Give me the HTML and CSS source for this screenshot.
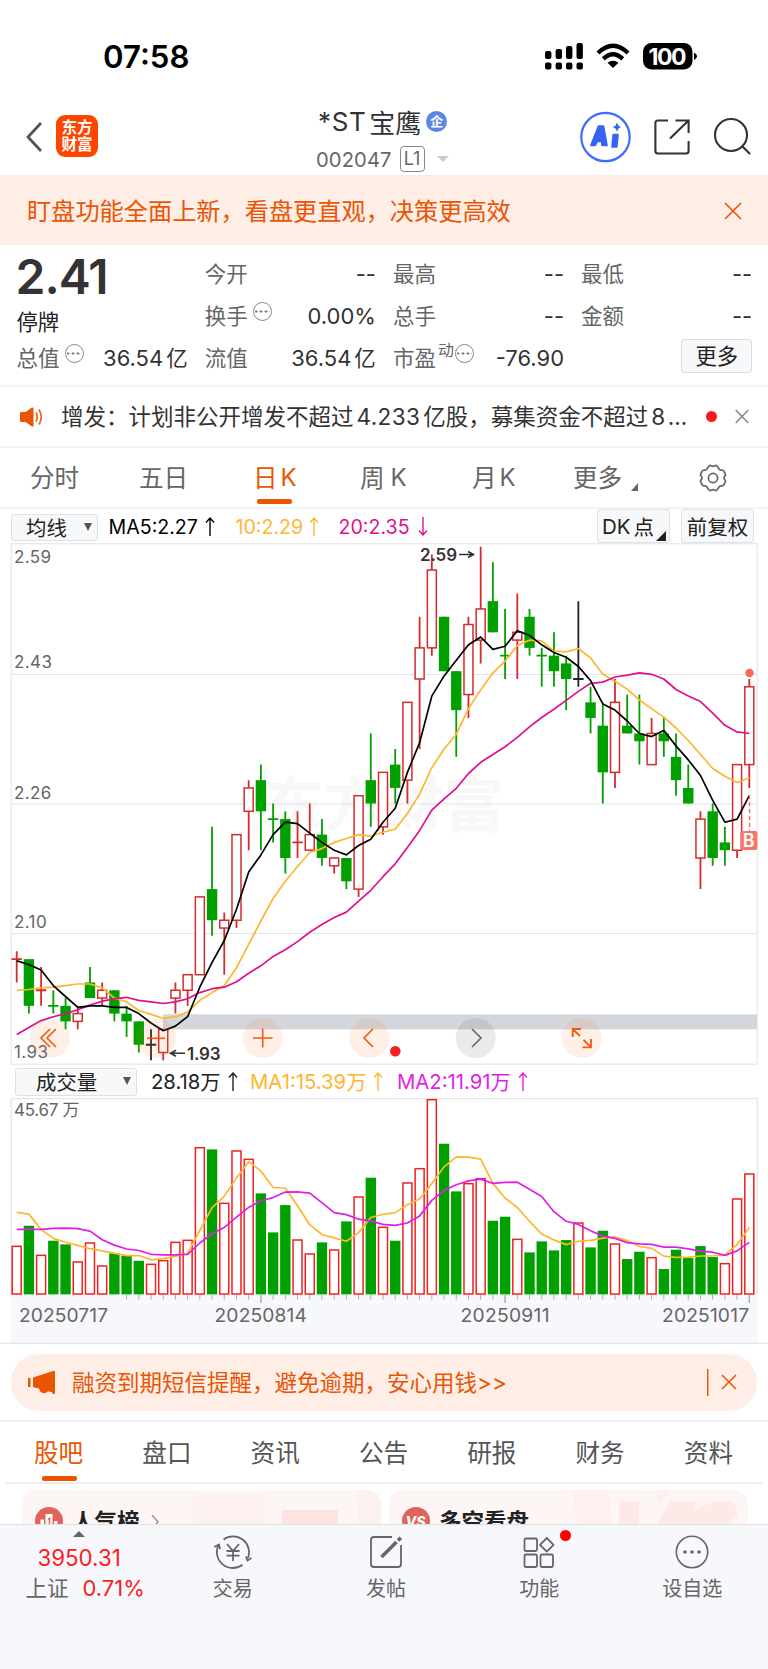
FILE: index.html
```html
<!DOCTYPE html>
<html lang="zh-CN">
<head>
<meta charset="utf-8">
<title>*ST宝鹰 002047</title>
<link rel="stylesheet" href="styles.css">
</head>
<body>
<div class="status">
  <span class="time">07:58</span>
  <svg class="status-icons" width="153" height="28" viewBox="544 42 153 28">
    <g fill="#000">
      <rect x="545" y="51" width="6.4" height="8" rx="2"/><rect x="555.6" y="49" width="6.4" height="10" rx="2"/><rect x="566" y="46" width="6.4" height="13" rx="2"/><rect x="576.5" y="43" width="6.4" height="16" rx="2"/>
      <rect x="545" y="62.6" width="6.4" height="6.8" rx="2"/><rect x="555.6" y="62.6" width="6.4" height="6.8" rx="2"/><rect x="566" y="62.6" width="6.4" height="6.8" rx="2"/><rect x="576.5" y="62.6" width="6.4" height="6.8" rx="2"/>
      <path d="M613 68 L607.5 62.8 Q613 58.8 618.5 62.8 Z"/>
      <rect x="643" y="43" width="49.5" height="26.6" rx="8.5"/>
      <path d="M694 52.5 Q697 54 697 56.3 T694 60.2Z"/>
    </g>
    <g fill="none" stroke="#000" stroke-width="4.4"><path d="M598 53 Q613 38.5 628 53"/><path d="M603.3 58.8 Q613 49.6 622.7 58.8"/></g>
    <text x="667.5" y="64.6" class="battery" text-anchor="middle" textLength="38">100</text>
  </svg>
</div>

<header class="header">
  <svg class="back" width="18" height="32" viewBox="0 0 18 32"><path d="M16 2 L3 16 L16 30" fill="none" stroke="#555" stroke-width="2.8"/></svg>
  <div class="logo"><span>东方</span><span>财富</span></div>
  <div class="title">
    <div class="name">*ST<span class="cn">宝鹰</span><span class="badge">企</span></div>
    <div class="code">002047<span class="l1">L1</span><svg width="12" height="6" viewBox="0 0 12 6"><path d="M0 0H12L6 6Z" fill="#ccc"/></svg></div>
  </div>
  <svg class="tools" width="172" height="52" viewBox="580 111 172 52">
    <circle cx="605.5" cy="137" r="24.2" fill="none" stroke="#3b6dff" stroke-width="2.2"/>
    <g fill="#3763f5" stroke="#3763f5" stroke-width="1.6" stroke-linejoin="round">
      <path fill-rule="evenodd" d="M598.5 126H603.5L607 145.5H602L601.4 141.5H597.3L595.3 145.5H590.8Z M598.6 137.6H600.8L600.4 132Z"/>
      <path d="M613.2 134.5H618L616.8 147H612Z"/>
      <path stroke="none" d="M617 122.6 L618.5 125.7 L621 127 L618.5 128.5 L617 131.4 L615.5 128.5 L612.8 127 L615.5 125.7Z"/>
    </g>
    <g fill="none" stroke="#333" stroke-width="2.1">
      <path d="M668 120.5H658Q655.4 120.5 655.4 123V151Q655.4 153.5 658 153.5H686Q688.6 153.5 688.6 151V141"/>
      <path d="M675.5 120.5H688.6V133M688 121L670 138.5"/>
      <circle cx="731" cy="135" r="16"/><path d="M742.5 146.5L750 154"/>
    </g>
  </svg>
</header>

<div class="banner"><span>盯盘功能全面上新，看盘更直观，决策更高效</span>
  <svg width="18" height="18" viewBox="0 0 18 18"><path d="M1 1L17 17M17 1L1 17" stroke="#ea5504" stroke-width="1.6"/></svg></div>

<section class="quote">
  <div class="last"><div class="price">2.41</div><div class="halt">停牌</div></div>
  <div class="cell"><span>今开</span><b>--</b></div>
  <div class="cell"><span>最高</span><b>--</b></div>
  <div class="cell"><span>最低</span><b>--</b></div>
  <div class="cell"><span>换手<i class="info"></i></span><b>0.00%</b></div>
  <div class="cell"><span>总手</span><b>--</b></div>
  <div class="cell"><span>金额</span><b>--</b></div>
  <div class="cell"><span>总值<i class="info"></i></span><b>36.54<em>亿</em></b></div>
  <div class="cell"><span>流值</span><b>36.54<em>亿</em></b></div>
  <div class="cell"><span>市盈<sup>动</sup><i class="info tight"></i></span><b>-76.90</b></div>
  <div class="cell right"><button class="more">更多</button></div>
</section>

<div class="news">
  <svg width="23" height="20" viewBox="0 0 23 20"><path d="M0 6.5Q0 5 1.5 5H5.5L12 .5Q13.5 0 13.5 1.5V18.5Q13.5 20 12 19.5L5.5 15H1.5Q0 15 0 13.500Z" fill="#ea5504"/><path d="M16 5.500Q18.500 10 16 14.500M19 2.500Q23.500 10 19 17.500" fill="none" stroke="#f26a24" stroke-width="1.8"/></svg>
  <span class="news-text">增发：计划非公开增发不超过<i>4.233</i>亿股，募集资金不超过<i>8</i><i class="more-dots">…</i></span>
  <span class="dot"></span>
  <svg width="14" height="15" viewBox="0 0 14 15"><path d="M.7 1L13.300 14M13.300 1L.7 14" stroke="#888" stroke-width="1.500"/></svg>
</div>

<nav class="periods">
  <span>分时</span><span>五日</span><span class="on">日<i>K</i></span><span>周<i class="wide">K</i></span><span>月<i>K</i></span>
  <span>更多<svg class="corner" width="7" height="8" viewBox="0 0 7 8"><path d="M7 0V8H0Z" fill="#666"/></svg></span>
  <span><svg class="gear" width="28" height="28" viewBox="0 0 28 28" fill="none" stroke="#666" stroke-width="1.7" stroke-linejoin="round"><path d="M9.800 2.200Q10.800 1 12.200 1.800Q14 3 15.800 1.800Q17.200 1 18.200 2.200L20.300 5.300Q21 6.200 22.500 6.200Q24.800 6.200 25.200 7.600L26.300 10.200Q26.800 11.300 25.700 12.300Q24.300 14 25.700 15.700Q26.800 16.700 26.300 17.800L25.200 20.400Q24.800 21.800 22.500 21.800Q21 21.800 20.300 22.700L18.200 25.800Q17.200 27 15.800 26.200Q14 25 12.200 26.200Q10.800 27 9.800 25.800L7.700 22.700Q7 21.800 5.500 21.800Q3.200 21.800 2.800 20.400L1.700 17.800Q1.200 16.700 2.300 15.700Q3.700 14 2.300 12.300Q1.200 11.300 1.700 10.200L2.800 7.600Q3.200 6.200 5.500 6.200Q7 6.200 7.700 5.300Z"/><circle cx="14" cy="14" r="4.600"/></svg></span>
</nav>

<div class="ma-row">
  <button class="pick ma-pick">均线<svg width="8" height="8" viewBox="0 0 8 8"><path d="M0 0H8L4 8Z" fill="#555"/></svg></button>
  <span class="ma c5">MA5:2.27<svg class="arrow" width="10" height="19" viewBox="0 0 10 19"><path d="M5 19V1M1 5.500L5 1L9 5.500"/></svg></span>
  <span class="ma c10">10:2.29<svg class="arrow" width="10" height="19" viewBox="0 0 10 19"><path d="M5 19V1M1 5.500L5 1L9 5.500"/></svg></span>
  <span class="ma c20">20:2.35<svg class="arrow" width="10" height="19" viewBox="0 0 10 19"><path d="M5 0V18M1 13.500L5 18L9 13.500"/></svg></span>
  <button class="pick dk">DK<em>点</em><svg width="10" height="10" viewBox="0 0 10 10"><path d="M10 0V10H0Z" fill="#222"/></svg></button>
  <button class="pick fq">前复权</button>
</div>

<svg id="price" class="chart" width="768" height="523" viewBox="0 543 768 523"></svg>

<div class="vol-row">
  <button class="pick vol-pick">成交量<svg width="8" height="8" viewBox="0 0 8 8"><path d="M0 0H8L4 8Z" fill="#555"/></svg></button>
  <span class="ma v0">28.18<em>万</em><svg class="arrow" width="10" height="19" viewBox="0 0 10 19"><path d="M5 19V1M1 5.500L5 1L9 5.500"/></svg></span>
  <span class="ma v1">MA1:15.39<em>万</em><svg class="arrow" width="10" height="19" viewBox="0 0 10 19"><path d="M5 19V1M1 5.500L5 1L9 5.500"/></svg></span>
  <span class="ma v2">MA2:11.91<em>万</em><svg class="arrow" width="10" height="19" viewBox="0 0 10 19"><path d="M5 19V1M1 5.500L5 1L9 5.500"/></svg></span>
</div>

<svg id="volume" class="chart" width="768" height="246" viewBox="0 1098 768 246"></svg>

<div class="promo-wrap"><div class="promo">
  <svg width="27" height="23" viewBox="0 0 27 23"><path d="M0 7H2.500V16H0ZM5 6.500L25 0H27V23H24.500V21.500L20 20.300Q17 23.500 13.500 21.500Q11.500 20.500 11.300 17.700L5 16Z" fill="#ea5504"/></svg>
  <span>融资到期短信提醒，避免逾期，安心用钱&gt;&gt;</span>
  <svg class="promo-x" width="30" height="27" viewBox="0 0 30 27"><path d="M.7 0V27M15 6L29 20M29 6L15 20" stroke="#ea5504" stroke-width="1.500" fill="none"/></svg>
</div></div>

<nav class="sections"><span class="on">股吧</span><span>盘口</span><span>资讯</span><span>公告</span><span>研报</span><span>财务</span><span>资料</span></nav>

<div class="cards">
  <div class="card">
    <svg class="art" width="200" height="60" viewBox="0 0 200 60"><path d="M12 3H84V60H12ZM175 0H196L200 14V60H180Z" fill="#fdf1ef"/><rect x="101" y="20" width="56" height="40" fill="#fde3e1"/></svg>
    <svg class="ico" width="28" height="28" viewBox="0 0 28 28"><circle cx="14" cy="14" r="14" fill="#e0645c"/><path d="M5.500 12.500H9V28H5.500ZM10.500 7H17.500V28H10.500ZM19 14H22.500V28H19Z" fill="#fff"/><path d="M12.800 12.500L14.500 11.200V20" stroke="#e0645c" stroke-width="1.500" fill="none"/></svg>
    <span>人气榜</span>
    <svg class="chev" width="8" height="16" viewBox="0 0 8 16"><path d="M1 1L7 8L1 15" fill="none" stroke="#999" stroke-width="1.500"/></svg>
  </div>
  <div class="card">
    <svg class="art" width="200" height="60" viewBox="0 0 200 60"><path d="M24 0H60L68 60H34ZM106 0H124L112 14Z" fill="#fdf0ee"/><path d="M71 11H91V60H71ZM122 11H150L128 60H96ZM132 40Q145 10 180 11Q190 12 189 27L174 36Q160 24 150 60H132Z" fill="#fdeae8"/></svg>
    <svg class="ico" width="28" height="28" viewBox="0 0 28 28"><circle cx="14" cy="14" r="14" fill="#e0645c"/><text x="13.500" y="19.500" class="vs" text-anchor="middle">VS</text></svg>
    <span>多空看盘</span>
  </div>
</div>

<footer class="dock">
  <div class="index"><svg width="12" height="6" viewBox="0 0 12 6"><path d="M0 6H12L6 0Z" fill="#666"/></svg><b>3950.31</b><span>上证<b>0.71%</b></span></div>
  <div class="item"><svg width="38" height="34" viewBox="0 0 38 34" fill="none" stroke="#666" stroke-width="1.800"><path d="M9.500 4.500A16 16 0 0 1 34 23M28.500 29.800A16 16 0 0 1 4.500 10M0 12L5 9.500L6 14M32 21.500L33.500 25.500L37.500 23M13 9L19 16L25 9M19 16V26M12.500 16H25.500M12.500 20.700H25.500"/></svg><span>交易</span></div>
  <div class="item"><svg width="34" height="34" viewBox="0 0 34 34" fill="none" stroke="#666" stroke-width="1.800"><path d="M23 2H5Q2 2 2 5V29Q2 32 5 32H29Q32 32 32 29V10"/><path d="M12.500 22L27.500 7" stroke-width="3.600"/><path d="M29 5.500L31.800 2.700" stroke-width="3.600"/></svg><span>发帖</span></div>
  <div class="item"><svg width="34" height="34" viewBox="0 0 34 34" fill="none" stroke="#666" stroke-width="1.800"><rect x="2.500" y="3.500" width="12.500" height="12.500" rx="1.500"/><rect x="2.500" y="19.500" width="12.500" height="12.500" rx="1.500"/><rect x="18.500" y="19.500" width="12.500" height="12.500" rx="1.500"/><path d="M24.800 3L31.500 9.800L24.800 16.600L18 9.800Z" stroke-linejoin="round"/></svg><span>功能</span><i class="new"></i></div>
  <div class="item"><svg width="34" height="34" viewBox="0 0 34 34"><circle cx="17" cy="17" r="15.700" fill="none" stroke="#666" stroke-width="1.600"/><g fill="#666"><circle cx="10" cy="17" r="1.800"/><circle cx="17" cy="17" r="1.800"/><circle cx="24" cy="17" r="1.800"/></g></svg><span>设自选</span></div>
</footer>
<script src="chart.js"></script>
</body>
</html>
```
FILE: styles.css
```css
* { box-sizing: border-box; }
body { margin: 0; width: 768px; height: 1669px; overflow: hidden; background: #fff; color: #333; font-family: Inter, "Noto Sans CJK SC", sans-serif; }
svg { display: block; flex: none; }
i, em { font-style: normal; }
b { font-weight: 400; }
button { font-family: inherit; margin: 0; padding: 0; }
span { white-space: nowrap; }

.status { height: 96px; padding: 42px 71px 0 103px; display: flex; justify-content: space-between; }
.time { font-size: 31.2px; font-weight: 600; line-height: 31px; color: #000; }
.battery { font-size: 23px; font-weight: 700; fill: #fff; }

.header { height: 81px; border-bottom: 2px solid #eeeef0; display: flex; align-items: flex-start; }
.back { margin: 25px 0 0 25px; }
.logo { width: 42px; height: 42px; margin: 19px 0 0 13px; border-radius: 9px; background: #ff4400; color: #fff; font-size: 15.500px; font-weight: 700; line-height: 17.500px; display: flex; flex-direction: column; align-items: center; justify-content: center; }
.title { margin: 7px 0 0 218px; width: 134px; }
.name { display: flex; align-items: center; height: 36px; font-size: 26px; letter-spacing: .6px; color: #333; padding-left: 2px; }
.cn { margin-left: 3px; letter-spacing: 0; }
.badge { width: 21px; height: 21px; margin-left: 5px; border-radius: 50%; background: #5b86e5; color: #fff; font-size: 13px; font-weight: 700; line-height: 20px; text-align: center; letter-spacing: 0; }
.code { display: flex; align-items: center; height: 28px; margin-top: 6px; font-size: 20.200px; color: #666; letter-spacing: .1px; }
.l1 { width: 25px; height: 26px; margin: 0 12px 0 8px; border: 1px solid #888; border-radius: 4px; font-size: 18px; line-height: 24px; text-align: center; }
.tools { margin: 15px 0 0 130px; }

.banner { height: 68px; padding: 0 26px 0 27px; background: #feeee6; color: #ea5504; font-size: 24.200px; display: flex; align-items: center; justify-content: space-between; }
.banner span { margin-top: -4px; }

.quote { height: 142px; padding: 8px 15.500px 0 16.500px; border-bottom: 2px solid #f3f3f5; display: grid; grid-template-columns: repeat(4, 171.200px); grid-template-rows: repeat(3, 42px); column-gap: 17px; }
.last { grid-row: span 2; }
.price { font-size: 48px; font-weight: 600; line-height: 48px; letter-spacing: -1px; margin-left: -1px; }
.halt { font-size: 21.300px; line-height: 34px; margin-top: 4px; color: #222; }
.cell { display: flex; align-items: center; justify-content: space-between; font-size: 21.500px; line-height: 42px; }
.cell > span { color: #666; display: flex; }
.cell b { font-size: 22px; }
.cell em { margin-left: 3px; font-size: 21.500px; }
.cell sup { font-size: 16px; line-height: 26px; margin-left: 2px; }
.info { width: 19px; height: 19px; margin: 7px 0 0 5.500px; border: 1.400px solid #888; border-radius: 50%; background: radial-gradient(circle 1.200px, #777 90%, transparent) 1px 50% / 5px 5px repeat-x; background-position: -.5px 50%; background-clip: content-box; padding: 0 1px; }
.info.tight { margin-left: 1px; }
.right { justify-content: flex-end; }
.more { width: 71px; height: 34px; margin-top: -4px; border: 1px solid #d9dce2; border-radius: 3px; background: #f7f8fa; color: #222; font-size: 21.300px; line-height: 30px; }

.news { height: 61px; padding: 0 18px 0 20px; border-bottom: 2px solid #f3f3f5; display: flex; align-items: center; }
.news-text { width: 628px; margin-left: 18px; font-size: 22.500px; line-height: 40px; overflow: hidden; }
.news-text i { margin: 0 3px; letter-spacing: .4px; }
.news-text .more-dots { margin: 0 0 0 -1px; }
.dot { width: 11px; height: 11px; margin: 0 18px 0 17px; border-radius: 50%; background: #f8181c; }

.periods { height: 61px; padding-left: 30px; border-bottom: 2px solid #f3f3f5; display: grid; grid-template-columns: 109px 114px 107px 112px 101px 126px 28px; font-size: 24.600px; line-height: 60px; color: #666; }
.periods span { display: flex; position: relative; }
.periods i { margin-left: 3px; font-size: 24px; }
.periods i.wide { margin-left: 6px; }
.periods .on, .sections .on { color: #ea5504; }
.periods .on::after, .sections .on::after { content: ""; position: absolute; left: 4px; bottom: 4px; width: 35px; height: 5px; border-radius: 2px; background: #ea5504; }
.corner { margin: 35px 0 0 9px; }
.gear { margin-top: 16px; }

.ma-row { height: 34px; padding-left: 11px; display: flex; align-items: flex-start; }
.pick { border: 1px solid #dfe1e8; border-radius: 3px; background: #f7f8fa; color: #222; display: flex; align-items: center; }
.ma-pick { width: 87px; height: 27px; margin-top: 5px; padding: 0 0 1px 14px; font-size: 20.400px; gap: 17px; }
.ma { display: flex; align-items: center; height: 35px; font-size: 19.600px; }
.arrow { margin-left: 3px; fill: none; stroke: currentColor; stroke-width: 1.400; }
.c5 { width: 127px; margin-left: 10.500px; color: #000; }
.c10 { width: 103px; color: #ffb62e; }
.c20 { width: 258.500px; color: #e0108c; }
.c10 .arrow { margin-left: 6px; }
.c20 .arrow { margin-left: 8px; }
.c5 .arrow { margin-left: 7px; }
.dk { width: 73px; height: 34px; padding-left: 4px; font-size: 20.500px; align-self: flex-start; }
.dk em { margin-left: 3px; }
.dk svg { margin: 20px 0 0 2px; }
.fq { width: 73px; height: 34px; margin-left: 11px; font-size: 20.500px; justify-content: center; }

.vol-row { height: 32px; padding-left: 15px; display: flex; align-items: center; }
.vol-row .ma { height: 32px; padding-bottom: 2px; font-size: 20.300px; }
.vol-row .arrow { margin-left: 7px; }
.vol-pick { width: 122px; height: 28px; padding: 0 0 2px 20px; font-size: 20.400px; gap: 26px; }
.v0 { width: 99px; margin-left: 14px; color: #222; }
.v1 { width: 147px; color: #ffb62e; }
.v2 { color: #e01ee6; }

.label { font-size: 17px; fill: #666; letter-spacing: .4px; }
.date { font-size: 19.200px; fill: #666; }
.mark { font-size: 17px; font-weight: 600; fill: #333; }
.wm { font-size: 60px; font-weight: 700; fill: #f8f8f8; }
.b-text { font-size: 18px; font-weight: 600; fill: #fff; }

.promo-wrap { height: 78px; padding: 10px 11px 0; border-bottom: 2px solid #f0f1f4; }
.promo { height: 57px; padding: 0 20px 0 17px; border-radius: 28px; background: #feeee6; color: #ea5504; font-size: 22.500px; display: flex; align-items: center; }
.promo span { margin: -3px 0 0 17px; }
.promo-x { margin-left: auto; }

.sections { height: 62px; margin: 0 6px; padding-left: 28px; border-bottom: 2px solid #ededf0; display: grid; grid-template-columns: repeat(7, 108.300px); font-size: 24.600px; line-height: 62px; color: #555; }
.sections span { position: relative; }
.sections .on::after { left: 8px; bottom: 3px; }

.cards { height: 40px; padding: 6px 22px 0 22px; overflow: hidden; display: flex; gap: 8px; }
.card { width: 359px; height: 60px; padding: 16px 0 0 13px; border-radius: 14px; background: #fef6f4; display: flex; flex: none; position: relative; overflow: hidden; font-size: 22.500px; font-weight: 600; color: #222; }
.card span { margin-left: 9px; line-height: 31px; position: relative; }
.art { position: absolute; right: 0; top: 0; }
.ico { position: relative; margin-top: 1px; }
.chev { margin: 8px 0 0 11px; position: relative; }
.vs { font-size: 14px; font-weight: 800; font-style: italic; fill: #fff; }

.dock { height: 145px; padding-left: 3px; border-top: 1px solid #dedfe2; background: #f7f8fb; display: grid; grid-template-columns: repeat(5, 153.200px); color: #666; font-size: 20px; }
.index { display: flex; flex-direction: column; align-items: center; padding: 6px 1px 0 0; font-size: 21.500px; }
.index b { color: #f81d22; }
.index > b { margin-top: 7px; line-height: 28px; font-size: 22.300px; }
.index span { margin: -1px 0 0 12px; line-height: 34px; }
.index span b { margin-left: 14px; font-size: 22px; }
.item { display: flex; flex-direction: column; align-items: center; padding-top: 10px; position: relative; }
.item span { line-height: 30px; margin-top: 5px; }
.new { position: absolute; left: 97.500px; top: 5px; width: 11px; height: 11px; border-radius: 50%; background: #f00; }
```
FILE: chart.js
```javascript
const STEP = 12.21, X0 = 16.7, GREEN = "#00a000", RED = "#d42c2c", VRED = "#f02020";
const x = i => X0 + i * STEP;
const y = c => 546.7 + (259 - c) * 7.782;

// [high, body top, body bottom, low, kind] in cents
const candles = [
  [207,206,206,203,"r"],[206,206,200,199,"g"],[205,202,202,200,"r"],[202,200,200,199,"g"],[201,200,198,197,"g"],
  [200,199,198,197,"r"],[205,203,201,201,"g"],[203,202,201,200,"r"],[202,202,199,198,"g"],[200,199,198,196,"g"],
  [198,198,195,194,"g"],[197,195,195,193,"k"],[197,197,194,193,"r"],[203,202,201,199,"r"],[204,204,202,200,"r"],
  [214,214,204,204,"r"],[223,215,211,209,"g"],[212,211,210,204,"r"],[222,222,211,210,"r"],[229,228,225,220,"r"],
  [231,229,225,220,"g"],[226,224,224,221,"g"],[225,224,219,217,"g"],[225,221,221,219,"r"],[226,222,220,220,"r"],
  [224,222,219,218,"g"],[219,219,218,217,"r"],[219,219,216,215,"g"],[227,227,215,214,"r"],[235,229,226,223,"g"],
  [230,230,223,222,"r"],[233,231,228,226,"g"],[239,239,229,226,"r"],[250,246,242,233,"r"],[258,256,246,245,"r"],
  [250,250,243,243,"g"],[243,243,238,232,"g"],[250,249,240,237,"r"],[259,251,247,244,"r"],[257,252,248,248,"g"],
  [251,245,245,242,"g"],[253,248,247,242,"r"],[251,250,246,245,"g"],[246,245,245,241,"g"],[248,245,243,241,"g"],
  [245,244,242,238,"g"],[252,242,242,241,"k"],[241,239,237,235,"g"],[239,236,230,226,"g"],[242,239,230,228,"r"],
  [240,236,235,235,"g"],[240,235,234,231,"g"],[237,235,231,231,"r"],[237,235,234,232,"g"],[235,232,229,227,"g"],
  [231,228,226,226,"g"],[225,224,219,215,"r"],[226,225,219,218,"g"],[223,221,220,218,"g"],[231,231,220,219,"r"],
  [242,241,231,228,"r"]
];
// [bar height, kind], three units to a pixel
const volumes = [
  [146,"r"],[206,"g"],[119,"r"],[161,"g"],[150,"g"],[99,"r"],[156,"r"],[87,"r"],[123,"g"],[116,"g"],[101,"g"],
  [92,"r"],[103,"r"],[158,"r"],[164,"r"],[442,"r"],[435,"g"],[275,"r"],[432,"r"],[407,"r"],[303,"g"],[186,"g"],
  [268,"g"],[165,"r"],[123,"r"],[156,"g"],[135,"r"],[219,"g"],[294,"r"],[350,"g"],[203,"r"],[161,"g"],[336,"r"],
  [379,"r"],[586,"r"],[452,"g"],[309,"g"],[334,"r"],[349,"r"],[221,"g"],[233,"g"],[167,"r"],[126,"g"],[159,"g"],
  [132,"g"],[163,"g"],[216,"r"],[141,"g"],[191,"g"],[153,"r"],[106,"g"],[128,"g"],[112,"r"],[76,"g"],[134,"g"],
  [109,"g"],[145,"g"],[112,"g"],[94,"r"],[288,"r"],[363,"r"]
];

// Moving average; `head` holds the values before the window is full.
const average = (data, n, head) => data.map((_, i) =>
  i < head.length ? head[i] : data.slice(i - n + 1, i + 1).reduce((a, b) => a + b, 0) / n);
const line = (vals, toY, color) =>
  `<polyline points="${vals.map((v, i) => x(i).toFixed(1) + "," + toY(v).toFixed(1)).join(" ")}" fill="none" stroke="${color}" stroke-width="1.7" stroke-linejoin="round"/>`;
const seg = (d, color, w = 1.4) => `<path d="${d}" fill="none" stroke="${color}" stroke-width="${w}"/>`;

let p = `<text class="wm" x="264" y="827">东方财富</text>`;
for (const gy of [674.5, 804, 933.5]) p += seg(`M11 ${gy}H757`, "#dfe3ee", 1.2);
p += `<rect x="11.300" y="543.700" width="746" height="520.500" fill="none" stroke="#ebebee" stroke-width="1.500"/>`;
[["2.59", 562.7], ["2.43", 668], ["2.26", 799], ["2.10", 928], ["1.93", 1057.5]].forEach(([t, ty]) =>
  p += `<text class="label" x="14" y="${ty}">${t}</text>`);
candles.forEach(([h, t, b, l, k], i) => {
  const c = k === "g" ? GREEN : k === "r" ? RED : "#222", cx = x(i);
  if (t === b) p += seg(`M${cx} ${y(h)}V${y(l)}M${cx - 5.2} ${y(t)}h10.400`, c, 1.8);
  else if (k === "g") p += seg(`M${cx} ${y(h)}V${y(l)}`, c, 1.8) + `<rect x="${cx - 5.2}" y="${y(t)}" width="10.400" height="${y(b) - y(t)}" fill="${c}"/>`;
  else p += seg(`M${cx} ${y(h)}V${y(t)}M${cx} ${y(b)}V${y(l)}`, c, 1.8) + `<rect x="${cx - 4.5}" y="${y(t)}" width="9" height="${y(b) - y(t)}" fill="#fff" stroke="${c}" stroke-width="1.500"/>`;
});
p += `<rect x="163" y="1014.300" width="594" height="15" fill="#d3d6db"/>`;
const close = candles.map(([, t, b, , k]) => k === "g" ? b : t);
p += line(average(close, 10, [202,202.1,202.3,202.4,202.6,202.8,202.8,202.3,201]), y, "#ffb62e");
p += line(average(close, 20, [196.3,197.2,198.1,198.6,199,199.5,200.1,200.6,200.9,201.1,200.7,200.5,200.3,200.5,200.9,201.7,202.2,202.4,203.1]), y, "#e0108c");
p += line(average(close, 5, [205.8,205.3,204.6,202.6]), y, "#000");
p += `<text class="mark" x="420" y="561" textLength="37">2.59</text>` + seg("M459 554.500H473M468 551.500L473.500 554.500L468 557.500", "#333", 1.6);
p += `<text class="mark" x="187" y="1059.500" textLength="33.500">1.93</text>` + seg("M185 1053.200H171M176 1050.200L170.500 1053.200L176 1056.200", "#333", 1.6);
p += `<path d="M749.500 795V831" stroke="#f8695a" stroke-width="1.400" stroke-dasharray="4 3"/><circle cx="749.500" cy="673" r="4.200" fill="#f8695a"/>`;
p += `<rect x="740.300" y="831" width="17" height="19" rx="2" fill="#fb7464"/><text class="b-text" x="748.800" y="847" text-anchor="middle">B</text>`;
[50, 156, 262.7, 369.3, 475.7, 581.7].forEach((cx, i) =>
  p += `<circle cx="${cx}" cy="1038" r="20" fill="${i === 4 ? "rgba(60,60,60,.11)" : "rgba(250,120,60,.12)"}"/>`);
const OR = "#ee5a10";
p += seg("M50 1029L41 1038L50 1047M56 1029L47 1038L56 1047", OR, 1.6) + seg("M147 1038.300H165", OR, 1.6);
p += seg("M253 1038H272.500M262.700 1028.500V1047.500", OR, 1.6) + seg("M373 1029L364 1038L373 1047", OR, 1.6) + seg("M472 1029L481 1038L472 1047", "#666", 1.6);
p += seg("M580 1036L573 1029.500M572.700 1037V1029H581M583.500 1040L590.500 1046.700M591 1039V1047.300H582.500", OR, 1.8);
p += `<circle cx="395.300" cy="1051.200" r="5.300" fill="#f52020"/>`;
document.getElementById("price").innerHTML = p;

const vy = h => 1294.4 - h / 3;
let v = `<rect x="11" y="1295" width="746.500" height="48" fill="#f7f8fb"/>` + seg("M0 1343.300H768", "#e6e6ea", 1.2);
v += seg("M11.300 1295V1098.600H757.300V1295", "#e6e6ea", 1.4);
v += `<text class="label" x="14" y="1116" textLength="66">45.67 万</text>`;
volumes.forEach(([h, k], i) => {
  const cx = x(i);
  v += k === "g" ? `<rect x="${cx - 5.2}" y="${vy(h)}" width="10.400" height="${h / 3}" fill="${GREEN}"/>`
    : `<rect x="${cx - 4.5}" y="${vy(h) + .6}" width="9" height="${h / 3 - 1}" fill="#fff" stroke="${VRED}" stroke-width="1.500"/>`;
  if (i > 8) v += seg(`M${cx} 1295V${i % 20 ? 1299.5 : 1303}`, "#aaa", i % 20 ? 1 : 1.4);
});
const vol = volumes.map(d => d[0]);
v += line(average(vol, 5, [246,241,195,168]), vy, "#ffb62e") + line(average(vol, 10, [195,195,195,198,199,197,190,164,148]), vy, "#e01ee6");
[["20250717", 19, 89], ["20250814", 214.5, 92.5], ["20250911", 460.5, 89], ["20251017", 662, 87]].forEach(([t, tx, w]) =>
  v += `<text class="date" x="${tx}" y="1322.300" textLength="${w}">${t}</text>`);
document.getElementById("volume").innerHTML = v;
```
